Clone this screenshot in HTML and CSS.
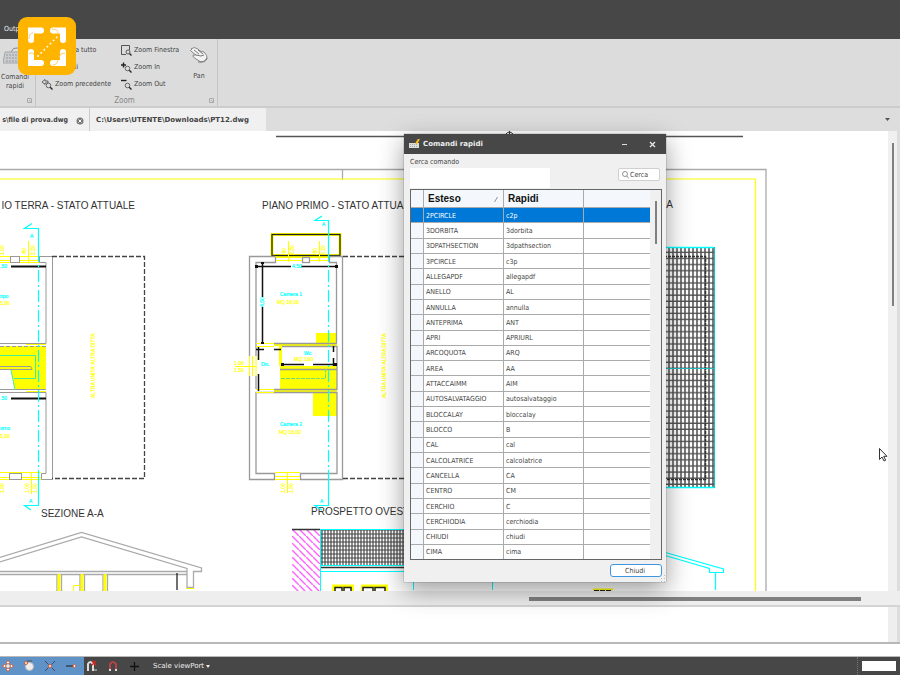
FILE: index.html
```html
<!DOCTYPE html>
<html lang="it">
<head>
    <meta charset="UTF-8">
    <meta name="viewport" content="width=device-width, initial-scale=1.0">
    <title>Comandi rapidi</title>
    <link rel="stylesheet" href="styles.css">
</head>
<body>
    <header class="menubar"><a class="menu-link" href="#">Output</a></header>

    <div class="ribbon">
        <section class="group group-cmd">
            <button class="big-btn">
                <svg width="24" height="22" viewBox="0 0 24 22"><path d="M8 8Q10 3 14 4T19 1" fill="none" stroke="#888"/><path d="M2 8h20l1 11H0z" fill="#c9cdd1" stroke="#a4a8ac"/><path d="M3 11h18M3 14h18M3 17h18" stroke="#999" stroke-dasharray="2 1"/></svg>
                <span>Comandi<br>rapidi</span>
            </button>
            <svg class="corner" width="5" height="5" viewBox="0 0 5 5"><path d="M.5 4.500V.5h4v4zM2 2l2.500 2.500" fill="none" stroke="#aaa"/></svg>
        </section>
        <section class="group group-zoom">
            <div class="tools">
                <button class="tool"><svg width="11" height="11" viewBox="0 0 11 11"><rect x=".5" y=".5" width="8" height="8" fill="none" stroke="#555"/><circle cx="7" cy="7" r="2" fill="#ddd" stroke="#333"/><path d="M8.500 8.500l2 2" stroke="#333"/></svg>Zoom a tutto</button>
                <button class="tool"><svg width="11" height="11" viewBox="0 0 11 11"><path d="M5 9.500H.5v-9h8V5" fill="none" stroke="#555"/><circle cx="7" cy="7" r="2" fill="#ddd" stroke="#555"/><path d="M8.500 8.500l2 2" stroke="#222" stroke-width="1.300"/></svg>Zoom Finestra</button>
                <button class="tool"><svg width="11" height="11" viewBox="0 0 11 11"><circle cx="5" cy="5" r="3" fill="none" stroke="#333"/></svg>Estendi</button>
                <button class="tool"><svg width="11" height="11" viewBox="0 0 11 11"><path d="M0 3h5M2.500 .5v5" stroke="#222" stroke-width="1.400"/><circle cx="6.500" cy="6.500" r="2.300" fill="none" stroke="#666"/><path d="M8.200 8.200l2.300 2.300" stroke="#222" stroke-width="1.300"/></svg>Zoom In</button>
                <button class="tool"><svg width="11" height="11" viewBox="0 0 11 11"><path d="M0 3l3-2.500V2h3v2H3v1.500z" fill="#ddd" stroke="#444" stroke-width=".8"/><circle cx="6.500" cy="6.500" r="2.300" fill="#ddd" stroke="#666"/><path d="M8.200 8.200l2.300 2.300" stroke="#222" stroke-width="1.300"/></svg>Zoom precedente</button>
                <button class="tool"><svg width="11" height="11" viewBox="0 0 11 11"><path d="M0 1.500h5.500" stroke="#222" stroke-width="1.400"/><circle cx="6.500" cy="6.500" r="2.300" fill="none" stroke="#666"/><path d="M8.200 8.200l2.300 2.300" stroke="#222" stroke-width="1.300"/></svg>Zoom Out</button>
            </div>
            <button class="big-btn pan">
                <svg width="20" height="18" viewBox="0 0 20 18"><path d="M2 3Q5 0 9 3l2 2 4 1q4 4 3 7-2 4-6 3l-5-3q-4-2-3-4l3 0-4-3q-3-2 0-3z" fill="#f2f2f2" stroke="#888"/><path d="M7 9l5 1 3-1M5 4l5 4M9 4l5 4M9 16q6 1 9-4" fill="none" stroke="#777"/></svg>
                <span>Pan</span>
            </button>
            <div class="group-name">Zoom</div>
            <svg class="corner" width="5" height="5" viewBox="0 0 5 5"><path d="M.5 4.500V.5h4v4zM2 2l2.500 2.500" fill="none" stroke="#aaa"/></svg>
        </section>
    </div>

    <nav class="tabs">
        <a class="tab tab-first" href="#">s\file di prova.dwg <svg width="8" height="8" viewBox="0 0 8 8"><circle cx="4" cy="4" r="3.500" fill="#777"/><path d="M2.500 2.500l3 3m0-3l-3 3" stroke="#fff"/></svg></a>
        <a class="tab tab-second" href="#">C:\Users\UTENTE\Downloads\PT12.dwg</a>
        <svg class="tab-arrow" width="5" height="3" viewBox="0 0 5 3"><path d="M0 0h5L2.500 3z" fill="#555"/></svg>
    </nav>

    <main class="workspace">
        <div class="canvas">
            <svg class="drawing" width="888" height="460" viewBox="0 131 888 460">
                <defs>
                    <pattern id="tiles" x="666" y="247" width="4" height="6.100" patternUnits="userSpaceOnUse"><path d="M0 5.500h4M3 0v6.100" stroke="#505050" stroke-width="1.500"/></pattern>
                    <pattern id="tilesSmall" x="321" y="529" width="3" height="4" patternUnits="userSpaceOnUse"><path d="M0 1h3M1 0v4" stroke="#444" stroke-width="1.200"/></pattern>
                    <pattern id="hatch" x="292" y="529" width="7" height="7" patternUnits="userSpaceOnUse"><path d="M-1-1l9 9" stroke="#f6f" stroke-width="1.500"/></pattern>
                </defs>

                <!-- sheet frame -->
                <g fill="none">
                    <path d="M0 169.500H766V591M342.500 170v10" stroke="#aaa" stroke-width="1.300"/>
                    <path d="M0 179H755.500V591" stroke="#ff0" stroke-width="1.200"/>
                    <path d="M276 136.500H743" stroke="#555" stroke-width="1.300"/>
                    <path d="M506 134q3-4 7 0M509.500 131v5" stroke="#333"/>
                </g>

                <g class="caption">
                    <text x="135" y="209" text-anchor="end">IO TERRA - STATO ATTUALE</text>
                    <text x="262" y="209">PIANO PRIMO - STATO ATTUALE</text>
                    <text x="673" y="208" text-anchor="end">PIANTA COPERTURA</text>
                    <text x="41" y="517">SEZIONE A-A</text>
                    <text x="311" y="515">PROSPETTO OVEST</text>
                </g>

                <!-- ground floor -->
                <path d="M0 346h46v44H15L11 370H0z" fill="#ff0"/>
                <path d="M0 256.500H39M0 260.500H39M0 262.500H39M28.500 241v21M26 344.500H46M26 391.500H46M0 472.500H41M0 477.500H41M0 479.500H41M31.500 473v21" stroke="#ff0" fill="none"/>
                <g fill="none" stroke="#999">
                    <path d="M39 256.500H52.500V479.500H41.500V473.500H46V392.500H0M0 389.500H46M39.500 257v5.500H46V343.500H0M0 366.500H30q2 0 2 3M0 369.500H32"/>
                    <path d="M0 346.500H46" stroke-dasharray="4 2"/>
                    <rect x="10.500" y="256.500" width="9" height="6" fill="#fff"/><rect x="9.500" y="473.500" width="12" height="6" fill="#fff"/>
                </g>
                <path d="M11 266.500H46M11 398.500H46" stroke="#111" stroke-width="2"/>
                <path d="M52 256.500H144.500V478.500H52" fill="none" stroke="#444" stroke-width="1.300" stroke-dasharray="5 2"/>
                <g fill="none" stroke="#0ff" stroke-width="1.200">
                    <path d="M32 223.500L24.500 228.500H38.500V250M31 510L24.500 505.500H38.500V480"/>
                    <path d="M38.500 250V480" stroke-dasharray="12 3 2 3"/>
                    <path d="M0 355.500H35.500V378.500H14M11 370l4 20" stroke="#4e9" stroke-width="1"/>
                </g>
                <g class="note cyan">
                    <text x="30" y="238">A</text><text x="29" y="503">A</text><text x="0" y="298">npo</text><text x="0" y="430">orno</text><text x="0" y="268">.50</text><text x="0" y="400">.50</text>
                </g>
                <g class="note yellow">
                    <text x="0" y="305">5,00</text><text x="0" y="438">5,00</text>
                    <text transform="translate(95 398) rotate(-90)">ALTRA UNITA' ALTRA DITTA</text>
                    <text transform="translate(26 255) rotate(-90)">.80</text><text transform="translate(35 255) rotate(-90)">2.20</text><text transform="translate(4 255) rotate(-90)">1.50</text>
                    <text transform="translate(29 493) rotate(-90)">1.00</text><text transform="translate(37 493) rotate(-90)">1.50</text><text transform="translate(4 493) rotate(-90)">1.50</text>
                </g>

                <!-- first floor -->
                <g fill="#ff0">
                    <rect x="316" y="333" width="21" height="12"/><rect x="274" y="343" width="63" height="3"/><rect x="280" y="366" width="57" height="24"/>
                    <rect x="274" y="389" width="63" height="3"/><rect x="313" y="392" width="24" height="24"/><rect x="279" y="346" width="3" height="20"/>
                </g>
                <rect x="272" y="234.500" width="68" height="21" fill="none" stroke="#ff0" stroke-width="3"/>
                <rect x="272" y="234.500" width="68" height="21" fill="none" stroke="#222" stroke-width="1.300"/>
                <g fill="none" stroke="#999" stroke-width="1.300">
                    <path d="M275 256.500H249.500V356M249.500 376V479.500H274.500V473.500H256V392.500H337V473.500H300.500V479.500H342.500V256.500H329.500V262.500H336.500V343M275.500 257V262.500H256V356M256 376V389M274 343.500H337M282 346.500H337V390M274 389.500H337M280 369.500H337"/>
                    <rect x="302.500" y="257.500" width="7" height="5" fill="#fff"/>
                </g>
                <g fill="none" stroke="#ff0">
                    <path d="M276 257.500H302M276 260.500H302M310 257.500H329M310 260.500H329M288.500 241v21M319.500 241v21M256 343.500H274M256 346.500H274M256 389.500H274M256 392.500H274M275 472.500H300M275 476.500H300M275 479.500H300M287.500 472V493"/>
                    <path d="M249.500 356V376M252.500 356V376M256 356V376M235 366.500H256"/>
                </g>
                <g stroke="#111" stroke-width="1.500">
                    <path d="M256 266.500H291M301 266.500H336M262.500 263V297M262.500 307V343M256 349.500H264M274 349.500H281M258.500 347V360M258.500 374V391M282 364.500H304M313 364.500H337M333.500 346V352M333.500 358V366" fill="none"/>
                    <path d="M255 266.500h3M335 266.500h3M262.500 262v2M262.500 342v2M281 364.500h3M334 364.500h3" stroke-width="3"/>
                </g>
                <path d="M343 256.500H420M343 478.500H420" stroke="#444" stroke-width="1.300" stroke-dasharray="5 2"/>
                <g fill="none" stroke="#0ff" stroke-width="1.200">
                    <path d="M322 216L315 220.500H328.500V250M322 510L315 505.500H328.500V480"/>
                    <path d="M328.500 250V480" stroke-dasharray="12 3 2 3"/>
                    <path d="M281 378.500H325.500V369" stroke="#7d7" stroke-width="1" stroke-dasharray="4 1"/>
                </g>
                <g class="note cyan">
                    <text x="322" y="226">A</text><text x="320" y="503">A</text><text x="280" y="296">Camera 1</text><text x="280" y="426">Camera 2</text><text x="304" y="355">Wc</text><text x="261" y="366">Dis.</text><text x="292" y="268">4.50</text><text transform="translate(264 307) rotate(-90)">4.50</text>
                </g>
                <g class="note yellow">
                    <text x="277" y="304">MQ 16,00</text><text x="279" y="434">MQ 16,00</text><text x="294" y="361">MQ 2,80</text><text x="234" y="365">1.00</text><text x="234" y="372">1.50</text>
                    <text transform="translate(386 398) rotate(-90)">ALTRA UNITA' ALTRA DITTA</text>
                    <text transform="translate(286 255) rotate(-90)">.90</text><text transform="translate(294 255) rotate(-90)">2.20</text><text transform="translate(317 255) rotate(-90)">.80</text><text transform="translate(325 255) rotate(-90)">2.20</text>
                    <text transform="translate(285 493) rotate(-90)">1.00</text><text transform="translate(293 493) rotate(-90)">1.50</text>
                </g>

                <!-- section -->
                <g fill="none" stroke="#aaa" stroke-width="1.300">
                    <path d="M-2 558L81.500 532.500 201.500 568V571.500H193.500V587.500H187V568.500L81.500 537 -2 562.500M0 571.500H187M0 574.500H187"/>
                    <path d="M57 574V591M61.500 574V591M80 574V591M84.500 574V591M103 574V591M107.500 574V591"/>
                </g>
                <path d="M59 574V591M82 574V591M105 574V591" stroke="#ff0" stroke-width="3"/>
                <path d="M73.500 591V585.500H80M186 588.500H194" fill="none" stroke="#ff0"/>
                <path d="M177 573V590" stroke="#222" stroke-width="1.300"/>

                <!-- west elevation -->
                <rect x="292" y="529" width="28" height="62" fill="url(#hatch)"/>
                <rect x="321" y="529" width="100" height="37" fill="url(#tilesSmall)"/>
                <path d="M292 529.500H320M321 567.500H420" stroke="#333" stroke-width="1.300"/>
                <path d="M320.500 529V591M321 529.500H420M321 565.500H420M321 571.500H420M413.500 571V590M492.500 571V590" fill="none" stroke="#0ff"/>
                <path d="M332 591V584.500H354V591M361 591V584.500H388V591" fill="#ff0"/>
                <path d="M335 591V587.500H342V591M344 591V587.500H351V591M363 591V587.500H373V591M375 591V587.500H385V591" fill="#fff" stroke="#222" stroke-width="1.500"/>
                <path d="M593 589.500H613" stroke="#ff0" stroke-width="2"/><path d="M594 590.500H612" stroke="#222" stroke-dasharray="5 1"/>

                <!-- roof plan -->
                <rect x="640" y="247" width="74" height="240" fill="url(#tiles)"/>
                <path d="M640 256.500H705.500V479.500H640" fill="none" stroke="#333" stroke-width="1.500" stroke-dasharray="3 1"/>
                <path d="M640 247.500H714M640 487.500H714" stroke="#0ff" stroke-width="1.500"/>
                <path d="M714.500 247V488M640 368.500H714" stroke="#2bb" stroke-width="1.200"/>
                <path d="M660 551L723.500 569V572.500H709.500V568.500L660 554M715.500 573V590" fill="none" stroke="#0ff" stroke-width="1.200"/>
            </svg>
        </div>
        <div class="vscroll"><div class="vthumb"></div></div>
    </main>
    <div class="hscroll"><div class="hthumb"></div></div>
    <div class="history"></div>
    <input class="command-line" type="text" aria-label="Riga di comando">

    <footer class="statusbar">
        <div class="snaps">
            <button class="snap" aria-label="Quadrante"><svg width="12" height="12" viewBox="0 0 12 12"><path d="M6 1v10M1 6h10" stroke="#eee" stroke-width="2"/><circle cx="6" cy="2.500" r="1.500" fill="#fff" stroke="#d65a30"/><circle cx="6" cy="9.500" r="1.500" fill="#fff" stroke="#d65a30"/><circle cx="2.500" cy="6" r="1.500" fill="#fff" stroke="#d65a30"/><circle cx="9.500" cy="6" r="1.500" fill="#fff" stroke="#d65a30"/></svg></button>
            <button class="snap" aria-label="Tangente"><svg width="12" height="12" viewBox="0 0 12 12"><circle cx="6.500" cy="6.500" r="4" fill="#eee" stroke="#bbb"/><circle cx="3" cy="3" r="1.500" fill="#fff" stroke="#d65a30"/><path d="M4 1h5" stroke="#555"/></svg></button>
            <button class="snap" aria-label="Intersezione"><svg width="12" height="12" viewBox="0 0 12 12"><path d="M1 1l10 10M11 1L1 11" stroke="#445" stroke-dasharray="4 1"/><circle cx="6" cy="6" r="1.500" fill="#fff" stroke="#d65a30"/></svg></button>
            <button class="snap" aria-label="Fine"><svg width="12" height="12" viewBox="0 0 12 12"><path d="M1 6h7" stroke="#334" stroke-width="1.300"/><circle cx="9.500" cy="6" r="1.500" fill="#fff" stroke="#d65a30"/></svg></button>
        </div>
        <button class="snap" aria-label="Disattiva snap"><svg width="12" height="12" viewBox="0 0 12 12"><path d="M2 11V4q2-4 5 0v7" fill="none" stroke="#ddd" stroke-width="2"/><path d="M6 1l4 4m0-4L6 5" stroke="#d22" stroke-width="1.500"/><path d="M8 10h3" stroke="#ccc"/></svg></button>
        <button class="snap" aria-label="Snap"><svg width="12" height="12" viewBox="0 0 12 12"><path d="M3 9V4q3-4 6 0v5" fill="none" stroke="#c44" stroke-width="1.600"/><path d="M2 10h2M8 10h2" stroke="#ddd" stroke-width="2"/></svg></button>
        <button class="snap" aria-label="Punto"><svg width="12" height="12" viewBox="0 0 12 12"><path d="M6.500 2v9M2 6.500h9" stroke="#111" stroke-width="1.300"/></svg></button>
        <button class="scale">Scale viewPort <svg width="4" height="3" viewBox="0 0 4 3"><path d="M0 0h4L2 3z" fill="#eee"/></svg></button>
        <div class="status-end"><div class="progress"></div></div>
    </footer>

    <svg class="logo" width="58" height="58" viewBox="0 0 58 58">
        <rect width="58" height="58" rx="9" fill="#ffb400"/>
        <g fill="none" stroke="#fff" stroke-width="6" stroke-linejoin="miter">
            <path d="M13 23V13.500H23"/><path d="M35 13.500H45V23"/><path d="M13 35V46H23"/><path d="M35 46H45V35"/>
        </g>
        <g fill="#fff"><circle cx="13" cy="23" r="3"/><circle cx="23" cy="13.500" r="3"/><circle cx="35" cy="13.500" r="3"/><circle cx="45" cy="23" r="3"/><circle cx="13" cy="35" r="3"/><circle cx="23" cy="46" r="3"/><circle cx="35" cy="46" r="3"/><circle cx="45" cy="35" r="3"/></g>
        <path d="M11 22q0-6 4-6M11 37q4-3 5 1M34 12q6 0 6 4M47 36q-5 0-6 4M40 43q-1 5-5 5" fill="none" stroke="#fc6"/>
        <path d="M20 39L39 20" stroke="#fff" stroke-width="1.800" stroke-linecap="round" stroke-dasharray=".1 4.300"/>
    </svg>

    <div class="dialog" role="dialog" aria-labelledby="dialogTitle">
        <div class="titlebar">
            <svg width="11" height="10" viewBox="0 0 11 10"><path d="M0 4h10v5H0z" fill="#ddd"/><path d="M1 5.500h8M1 7.500h8" stroke="#aaa" stroke-dasharray="1 1"/><path d="M7 5l3-5" stroke="#fb2" stroke-width="2"/></svg>
            <h2 class="title" id="dialogTitle">Comandi rapidi</h2>
            <button class="win-btn" aria-label="Riduci"><svg width="7" height="7" viewBox="0 0 7 7"><path d="M1 3.500h5" stroke="#ddd"/></svg></button>
            <button class="win-btn" aria-label="Chiudi finestra"><svg width="7" height="7" viewBox="0 0 7 7"><path d="M1 1l5 5M6 1L1 6" stroke="#eee" stroke-width="1.200"/></svg></button>
        </div>
        <div class="dialog-body">
            <label class="search-label" for="search">Cerca comando</label>
            <div class="search-row">
                <input class="search" id="search" type="text">
                <button class="search-btn"><svg width="7" height="8" viewBox="0 0 7 8"><circle cx="3" cy="3" r="2.500" fill="none" stroke="#777" stroke-width=".8"/><path d="M4.800 5l2 2.500" stroke="#777" stroke-width=".8"/></svg>Cerca</button>
            </div>
            <div class="grid">
                <table class="commands">
                    <thead>
                        <tr><th class="mark"></th><th class="name">Esteso<svg class="sort" width="4" height="5" viewBox="0 0 4 5"><path d="M.5 5l3-5" stroke="#777" stroke-width=".8"/></svg></th><th class="short">Rapidi</th><th></th></tr>
                    </thead>
                    <tbody>
                        <tr class="selected"><td></td><td>2PCIRCLE</td><td>c2p</td><td></td></tr>
                        <tr><td></td><td>3DORBITA</td><td>3dorbita</td><td></td></tr>
                        <tr><td></td><td>3DPATHSECTION</td><td>3dpathsection</td><td></td></tr>
                        <tr><td></td><td>3PCIRCLE</td><td>c3p</td><td></td></tr>
                        <tr><td></td><td>ALLEGAPDF</td><td>allegapdf</td><td></td></tr>
                        <tr><td></td><td>ANELLO</td><td>AL</td><td></td></tr>
                        <tr><td></td><td>ANNULLA</td><td>annulla</td><td></td></tr>
                        <tr><td></td><td>ANTEPRIMA</td><td>ANT</td><td></td></tr>
                        <tr><td></td><td>APRI</td><td>APRIURL</td><td></td></tr>
                        <tr><td></td><td>ARCOQUOTA</td><td>ARQ</td><td></td></tr>
                        <tr><td></td><td>AREA</td><td>AA</td><td></td></tr>
                        <tr><td></td><td>ATTACCAIMM</td><td>AIM</td><td></td></tr>
                        <tr><td></td><td>AUTOSALVATAGGIO</td><td>autosalvataggio</td><td></td></tr>
                        <tr><td></td><td>BLOCCALAY</td><td>bloccalay</td><td></td></tr>
                        <tr><td></td><td>BLOCCO</td><td>B</td><td></td></tr>
                        <tr><td></td><td>CAL</td><td>cal</td><td></td></tr>
                        <tr><td></td><td>CALCOLATRICE</td><td>calcolatrice</td><td></td></tr>
                        <tr><td></td><td>CANCELLA</td><td>CA</td><td></td></tr>
                        <tr><td></td><td>CENTRO</td><td>CM</td><td></td></tr>
                        <tr><td></td><td>CERCHIO</td><td>C</td><td></td></tr>
                        <tr><td></td><td>CERCHIODIA</td><td>cerchiodia</td><td></td></tr>
                        <tr><td></td><td>CHIUDI</td><td>chiudi</td><td></td></tr>
                        <tr><td></td><td>CIMA</td><td>cima</td><td></td></tr>
                    </tbody>
                </table>
                <div class="grid-scroll"><div class="grid-thumb"></div></div>
            </div>
            <div class="actions"><button class="close-btn">Chiudi</button></div>
        </div>
        <svg class="grip" width="7" height="7" viewBox="0 0 7 7"><path d="M5 0h1v1H5zM5 3h1v1H5zM5 6h1v1H5zM2 3h1v1H2zM2 6h1v1H2z" fill="#bbb"/></svg>
    </div>

    <svg class="cursor" width="9" height="14" viewBox="0 0 9 14"><path d="M.5 .5v11l2.500-2.500 2 4 1.700-.8-2-3.900H8z" fill="#fff" stroke="#333"/></svg>
</body>
</html>
```

FILE: styles.css
```css
* {
    box-sizing: border-box;
}
body {
    margin: 0;
    min-height: 100vh;
    display: flex;
    flex-direction: column;
    position: relative;
    overflow: hidden;
    background-color: #ddd;
    color: #444;
    font-family: "DejaVu Sans Condensed", "DejaVu Sans", sans-serif;
    font-size: 7px;
    line-height: 9px;
}
button, input {
    margin: 0;
    padding: 0;
    border: none;
    background: none;
    color: inherit;
    font: inherit;
}
a {
    color: inherit;
    text-decoration: none;
}
svg {
    display: block;
    flex: none;
}
.menubar {
    height: 39px;
    padding: 25px 4px 0;
    background-color: #474747;
    color: #eee;
}

/* ribbon */
.ribbon {
    display: flex;
    height: 69px;
    background-color: #dcdcdc;
    border-bottom: 2px solid #ccc;
}
.group {
    position: relative;
    border-right: 1px solid #c4c4c4;
}
.group-cmd {
    width: 36px;
}
.group-zoom {
    width: 182px;
    display: grid;
    grid-template-columns: 1fr 36px;
    padding: 2px 0 0 6px;
}
.big-btn {
    display: flex;
    flex-direction: column;
    align-items: center;
    gap: 7px;
    padding-top: 5px;
    width: 30px;
    text-align: center;
}
.pan {
    gap: 8px;
    width: 36px;
}
.tools {
    display: grid;
    grid-template-columns: 79px 1fr;
    grid-auto-rows: 17px;
    padding: 1px 0 2px;
}
.tool {
    display: flex;
    align-items: center;
    gap: 2px;
    white-space: nowrap;
}
.group-name {
    grid-column: 1 / -1;
    padding-right: 10px;
    color: #888;
    font-size: 8px;
    text-align: center;
}
.corner {
    position: absolute;
    right: 3px;
    bottom: 3px;
}

/* file tabs */
.tabs {
    display: flex;
    align-items: center;
    height: 23px;
    font-weight: bold;
}
.tab {
    display: flex;
    align-items: center;
    height: 100%;
    padding-top: 2px;
    background-color: #f0f0f0;
    white-space: nowrap;
}
.tab-first {
    width: 90px;
    justify-content: flex-end;
    gap: 8px;
    padding-right: 5px;
    border-right: 1px solid #ccc;
}
.tab-second {
    width: 176px;
    padding-left: 6px;
    font-family: "DejaVu Sans", sans-serif;
}
.tab-arrow {
    margin-left: auto;
    margin-right: 10px;
}

/* drawing area */
.workspace {
    flex: 1;
    display: flex;
    min-height: 0;
    margin-right: 3px;
}
.canvas {
    flex: 1;
    min-width: 0;
    overflow: hidden;
    background-color: #fff;
}
.caption {
    fill: #333;
    font-family: "Liberation Sans", Arial, sans-serif;
    font-size: 10px;
}
.note {
    font-family: "Liberation Sans", Arial, sans-serif;
    font-size: 5px;
}
.cyan {
    fill: #0ff;
    stroke: #0ff;
    stroke-width: 0.2;
}
.yellow {
    fill: #ff0;
    stroke: #ff0;
    stroke-width: 0.2;
}
.vscroll {
    width: 9px;
    padding: 12px 3px 0 4px;
    background-color: #f0f0f0;
}
.vthumb {
    height: 163px;
    background-color: #808080;
}
.hscroll {
    height: 16px;
    padding: 6px 39px 0 529px;
    background-color: #eee;
    border-bottom: 2px solid #d4d4d4;
}
.hthumb {
    height: 4px;
    background-color: #808080;
}
.history {
    height: 35px;
    margin-right: 3px;
    background-color: #fff;
    border-right: 9px solid #eee;
}
.command-line {
    height: 15px;
    background-color: #fff;
    border-top: 2px solid #b8b8b8;
    border-bottom: 1px solid #b8b8b8;
}

/* status bar */
.statusbar {
    display: flex;
    align-items: center;
    height: 18px;
    background-color: #474747;
    color: #eee;
}
.snaps {
    display: flex;
    height: 100%;
    background-color: #5f92c6;
}
.snap {
    display: flex;
    align-items: center;
    padding: 0 7px 0 2px;
}
.scale {
    display: flex;
    align-items: center;
    gap: 2px;
    padding: 1px 0 0 6px;
    font-family: "DejaVu Sans", sans-serif;
}
.status-end {
    display: flex;
    align-items: center;
    height: 100%;
    margin-left: auto;
    padding: 0 4px;
    border-left: 1px dotted #777;
}
.progress {
    width: 34px;
    height: 10px;
    background-color: #fff;
}

/* quick commands window */
.dialog {
    position: absolute;
    left: 404px;
    top: 134px;
    width: 262px;
    background-color: #f0f0f0;
    box-shadow: 0 8px 24px rgba(0, 0, 0, 0.4), 0 0 1px rgba(0, 0, 0, 0.6);
}
.titlebar {
    display: flex;
    align-items: center;
    height: 20px;
    padding-left: 5px;
    background-color: #474747;
    color: #eee;
}
.title {
    flex: 1;
    margin: 0 0 0 3px;
    font-family: "DejaVu Sans", sans-serif;
    font-size: 7px;
}
.win-btn {
    display: flex;
    justify-content: center;
    width: 28px;
}
.dialog-body {
    padding: 4px 4px 5px 6px;
}
.search-label {
    display: block;
    height: 10px;
}
.search-row {
    display: flex;
    justify-content: space-between;
    align-items: flex-start;
    height: 21px;
    padding-right: 2px;
}
.search {
    width: 140px;
    height: 20px;
    background-color: #fff;
}
.search-btn {
    display: flex;
    align-items: center;
    gap: 1px;
    width: 42px;
    height: 13px;
    padding: 1px 0 0 3px;
    background-color: #fff;
    border: 1px solid #d0d0d0;
    border-radius: 2px;
}
.grid {
    display: flex;
    height: 371px;
    border: 1px solid #666;
}
.commands {
    flex: 1;
    height: 100%;
    table-layout: fixed;
    border-collapse: separate;
    border-spacing: 0;
    background-color: #fff;
}
.commands th,
.commands td {
    padding: 2px 0 0 2px;
    border-right: 1px solid #aaa;
    border-bottom: 1px solid #aaa;
    text-align: left;
    white-space: nowrap;
}
.commands th:last-child,
.commands td:last-child {
    border-right: none;
}
.commands tr:last-child td {
    border-bottom: none;
}
.commands thead th {
    height: 18px;
    padding: 0 0 0 4px;
    background-color: #f4f8fd;
    border-bottom: 1px solid #aaa;
    color: #111;
    font-family: "Liberation Sans", Arial, sans-serif;
    font-size: 10px;
    line-height: 12px;
}
.commands td:first-child {
    background-color: #f4f8fd;
}
.mark {
    width: 13px;
}
.name, .short {
    width: 80px;
}
.sort {
    float: right;
    margin: 4px 5px 0 0;
}
.commands .selected td {
    background-color: #0078d7;
    color: #fff;
}
.grid-scroll {
    width: 11px;
    padding: 11px 4px 0 5px;
    background-color: #f0f0f0;
}
.grid-thumb {
    height: 43px;
    background-color: #808080;
}
.actions {
    display: flex;
    justify-content: flex-end;
    padding-top: 4px;
}
.close-btn {
    width: 52px;
    height: 13px;
    padding: 1px 2px 0 0;
    background-color: #fff;
    border: 1px solid #3c96e0;
    border-radius: 3px;
}
.grip {
    position: absolute;
    right: 0;
    bottom: 0;
}
.logo {
    position: absolute;
    left: 18px;
    top: 17px;
}
.cursor {
    position: absolute;
    left: 879px;
    top: 448px;
}
```
